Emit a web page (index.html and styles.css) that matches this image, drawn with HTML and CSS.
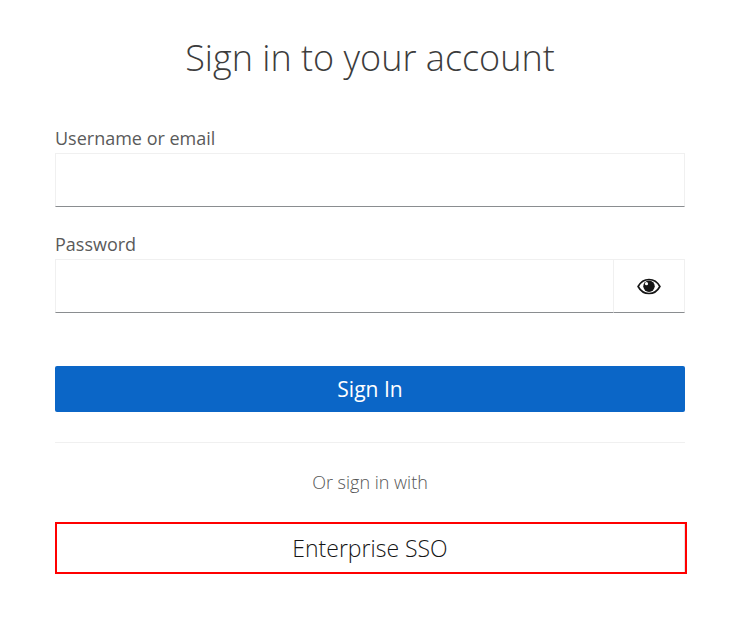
FILE: index.html
```html
<!DOCTYPE html>
<html lang="en">
<head>
<meta charset="utf-8">
<title>Sign in</title>
<link rel="stylesheet" href="styles.css">
</head>
<body>
<main class="card">
  <h1 class="title">Sign in to your account</h1>
  <form class="form">
    <div class="field">
      <label class="label" for="u">Username or email</label>
      <input class="input" id="u" type="text">
    </div>
    <div class="field field-second">
      <label class="label" for="p">Password</label>
      <div class="group">
        <input class="input input-grow" id="p" type="password">
        <button class="eye" type="button" aria-label="Show password">
          <svg width="24" height="17" viewBox="0 0 26 18" class="eye-icon"><path fill="none" stroke="#151515" stroke-width="1.8" d="M1.2 9C3.8 4.2 8 1.4 13 1.4S22.2 4.2 24.8 9C22.2 13.8 18 16.600 13 16.600S3.800 13.800 1.200 9Z"/><circle cx="13" cy="8.800" r="6.200" fill="#151515"/><circle cx="10.300" cy="5.900" r="1.700" fill="#fff"/></svg>
        </button>
      </div>
    </div>
    <button class="submit" type="button">Sign In</button>
  </form>
  <hr class="divider">
  <p class="alt">Or sign in with</p>
  <a class="sso">Enterprise SSO</a>
</main>
</body>
</html>
```
FILE: styles.css
```css
* { box-sizing: border-box; }
html, body { margin: 0; background: #fff; }
body { font-family: "Open Sans", sans-serif; color: #151515; }
.card { width: 736px; height: 622px; padding: 35px 51px 0 55px; overflow: hidden; }
.title { margin: 0; font-size: 36px; font-weight: 300; line-height: 46px; text-align: center; color: #3c3c3c; width: 630px; }
.form { width: 630px; margin-top: 45px; display: flex; flex-direction: column; }
.field { display: flex; flex-direction: column; }
.field-second { margin-top: 25px; }
.label { font-size: 18px; line-height: 24px; color: #5a5a5a; height: 27px; }
.input { display: block; width: 100%; height: 54px; flex: none; border: 1px solid #f0f0f0; border-bottom: 1px solid #8a8d90; background: #fff; padding: 0 8px; outline: none; font: inherit; margin: 0; }
.input-grow { flex: 1; width: auto; min-width: 0; }
.group { display: flex; height: 54px; }
.eye { flex: 0 0 71px; height: 54px; border: 1px solid #f0f0f0; border-left: 0; border-bottom: 1px solid #8a8d90; background: #fff; padding: 0; display: flex; align-items: center; justify-content: center; }
.eye-icon { display: block; }
.submit { margin-top: 53px; height: 46px; border: 0; border-radius: 2px; background: #0b66c7; color: #fff; font: 500 21px/46px "Open Sans", sans-serif; padding: 0; }
.divider { width: 630px; border: 0; border-top: 1px solid #f0f0f0; margin: 30px 0 0; }
.alt { width: 630px; margin: 26px 0 0; font-size: 18px; font-weight: 300; line-height: 26px; text-align: center; color: #555; }
.sso { display: block; width: 632px; height: 52px; margin-top: 27px; border: 2px solid #f00; padding-right: 2px; font-size: 23px; font-weight: 300; line-height: 48px; text-align: center; color: #151515; background: #fff; box-shadow: inset -1px 0 0 #e4e4e4; }
```
